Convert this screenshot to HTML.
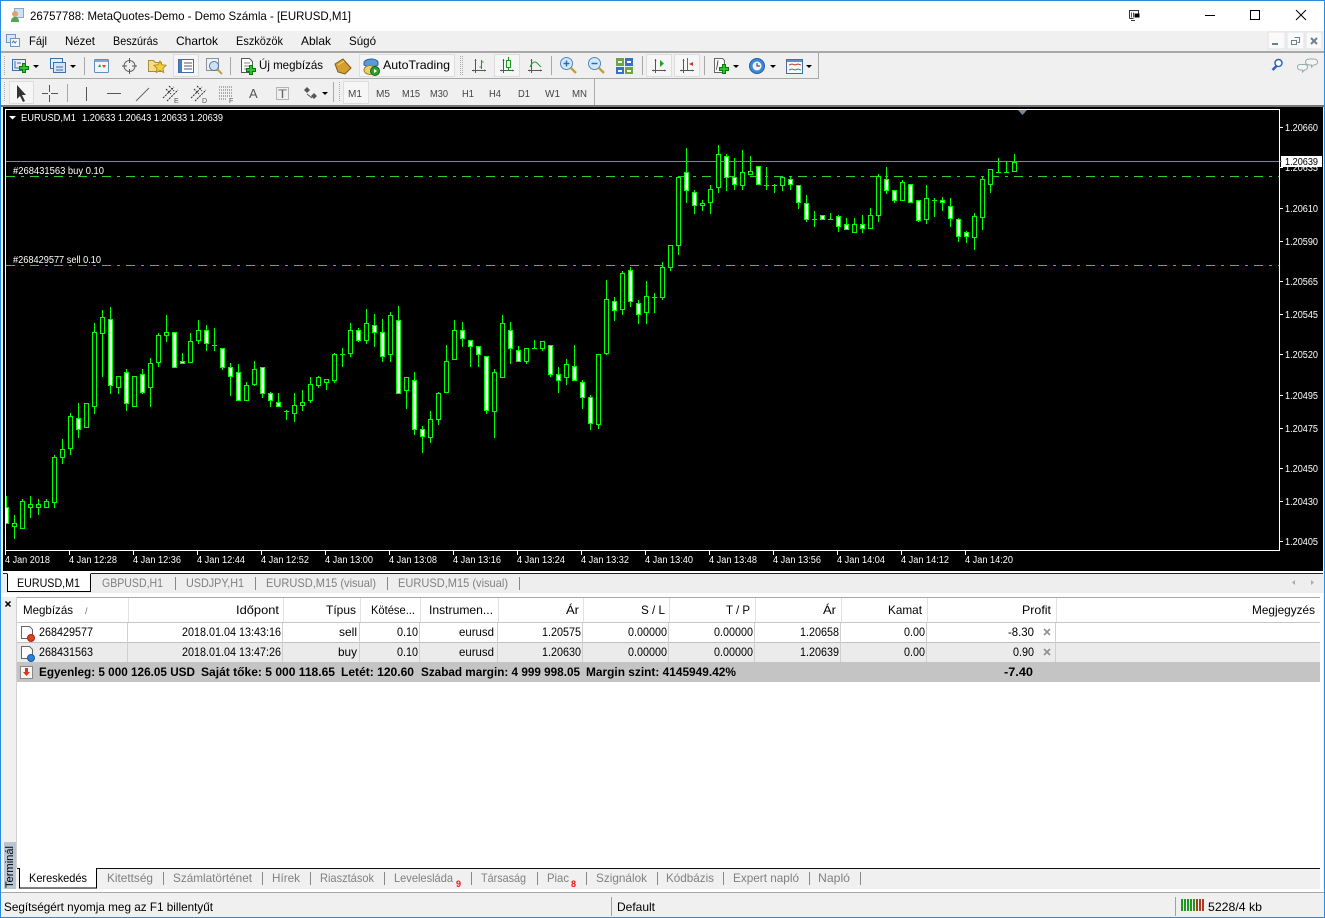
<!DOCTYPE html>
<html><head><meta charset="utf-8"><title>MetaTrader</title>
<style>
html,body{margin:0;padding:0;background:#f0f0f0;overflow:hidden;width:1325px;height:918px}
svg{display:block}
text{font-family:"Liberation Sans",sans-serif;font-size:12px;fill:#000;white-space:pre}
.c text{font-size:10px;fill:#fff}
.g text{fill:#808080}
.k text{fill:#333}
.b text{font-weight:bold}
.tf text{font-size:10px;fill:#444}
.cr{shape-rendering:crispEdges}
</style></head><body>
<svg width="1325" height="918" viewBox="0 0 1325 918" xmlns="http://www.w3.org/2000/svg">
<defs>
<clipPath id="cl"><rect x="6" y="110" width="1273" height="440"/></clipPath>
<g id="plus"><path d="M3.500 .5h3v3h3v3h-3v3h-3v-3h-3v-3h3z" fill="#35c035" stroke="#0b7a0b"/></g>
<g id="arr"><path d="M0 0h6l-3 3z" fill="#000"/></g>
<g id="axes"><path d="M4.500 1v14M1 12.500h14" stroke="#555" fill="none"/><path d="M1 12.500l2-1v2zM15 12.500l-2-1v2zM4.500 1l-1 2h2z" fill="#555"/></g>
</defs>
<rect width="1325" height="918" fill="#f0f0f0"/>
<!-- title bar -->
<rect x="1" y="1" width="1323" height="30" fill="#fff"/>
<g>
<rect x="14.500" y="8.500" width="9" height="9" fill="#cfe0f2" stroke="#8aa8c8"/>
<circle cx="15" cy="14" r="3" fill="#e0a070"/><path d="M11 22c0-4 2-5 4-5s4 1 4 5z" fill="#52a552"/>
</g>
<text x="30" y="20" textLength="321" lengthAdjust="spacingAndGlyphs">26757788: MetaQuotes-Demo - Demo Számla - [EURUSD,M1]</text>
<g fill="none" stroke="#000" class="cr">
<path d="M1129.500 18.500v-8h9v3M1129.500 18.500h4M1131 20.500h4" stroke="#333"/>
<path d="M1131.500 12.500v5M1133.500 12.500v5" stroke="#555"/>
<rect x="1135.500" y="14.500" width="3" height="2" stroke-width="2"/>
<path d="M1205 15.500h10"/>
<rect x="1250.500" y="10.500" width="9" height="9"/>
</g>
<path d="M1296 10l10 10M1306 10l-10 10" stroke="#000" fill="none"/>
<!-- menu bar -->
<rect x="1" y="31" width="1323" height="21" fill="#f0f0f0"/>
<g>
<rect x="6.500" y="34.500" width="9" height="8" fill="#dbe8f6" stroke="#6d95c5"/>
<rect x="10.500" y="38.500" width="9" height="8" fill="#f4f8fc" stroke="#6d95c5"/>
<path d="M12 43l1.500-2 1.500 2 1.500-2" stroke="#4477aa" fill="none"/>
</g>
<text x="29" y="45" textLength="18" lengthAdjust="spacingAndGlyphs">Fájl</text>
<text x="65" y="45" textLength="30" lengthAdjust="spacingAndGlyphs">Nézet</text>
<text x="113" y="45" textLength="45" lengthAdjust="spacingAndGlyphs">Beszúrás</text>
<text x="176" y="45" textLength="42" lengthAdjust="spacingAndGlyphs">Chartok</text>
<text x="236" y="45" textLength="47" lengthAdjust="spacingAndGlyphs">Eszközök</text>
<text x="301" y="45" textLength="30" lengthAdjust="spacingAndGlyphs">Ablak</text>
<text x="349" y="45" textLength="27" lengthAdjust="spacingAndGlyphs">Súgó</text>
<g class="cr">
<rect x="1268" y="32" width="17" height="17" fill="#fafafa" stroke="#e2e2e2"/>
<rect x="1287" y="32" width="17" height="17" fill="#fafafa" stroke="#e2e2e2"/>
<rect x="1306" y="32" width="16" height="17" fill="#fafafa" stroke="#e2e2e2"/>
<path d="M1272 44h6" stroke="#6f7f8d" stroke-width="2"/>
<path d="M1294.500 37.500h5v5h-2M1291.500 40.500h5v4h-5z" stroke="#6f7f8d" fill="none"/>
</g>
<path d="M1311 38l6 6M1317 38l-6 6" stroke="#6f7f8d" stroke-width="2" fill="none"/>
<rect class="cr" x="1" y="51" width="1323" height="2" fill="#a8a8a8"/>
<!-- toolbar lines -->
<g class="cr" fill="#a8a8a8">
<rect x="1" y="78" width="818" height="1"/>
<rect x="818" y="52" width="1" height="27"/>
<rect x="594" y="79" width="1" height="26"/>
<rect x="1" y="105" width="1323" height="2" fill="#777"/>
<rect x="84" y="57" width="1" height="18"/><rect x="230" y="57" width="1" height="18"/>
<rect x="551" y="56" width="1" height="19"/><rect x="642" y="56" width="1" height="19"/><rect x="704" y="56" width="1" height="19"/>
<rect x="67" y="84" width="1" height="18"/><rect x="333" y="82" width="1" height="20"/>
</g>
<g stroke="#aaa" stroke-dasharray="1 1" fill="none" class="cr">
<path d="M4.500 56v19M4.500 82v20M339.500 82v20M460.500 56v19M462.500 56v19" />
</g>
<!-- pressed buttons -->
<g class="cr" fill="#f6f6f6" stroke="#dddddd">
<rect x="173.500" y="54.500" width="25" height="22"/>
<rect x="494.500" y="54.500" width="25" height="22"/>
<rect x="646.500" y="54.500" width="25" height="22"/>
<rect x="674.500" y="54.500" width="25" height="22"/>
<rect x="359.500" y="54.500" width="95" height="22"/>
<rect x="9.500" y="81.500" width="24" height="22"/>
<rect x="343.500" y="81.500" width="25" height="22"/>
</g>
<!-- toolbar 1 icons -->
<g>
<rect x="12.500" y="59.500" width="13" height="11" fill="#e4eefa" stroke="#3f6fa8"/><path d="M15 61v7h8M17 63h4" stroke="#3f6fa8" fill="none"/>
<use href="#plus" x="19" y="63"/><use href="#arr" x="33" y="65"/>
<rect x="50.500" y="58.500" width="12" height="10" fill="#e4eefa" stroke="#3f6fa8"/><rect x="53.500" y="62.500" width="12" height="10" fill="#d5e4f6" stroke="#3f6fa8"/><path d="M56 67h7M56 70h7" stroke="#3f6fa8"/>
<use href="#arr" x="70" y="65"/>
<rect x="94.500" y="59.500" width="14" height="13" rx="1" fill="#f2f6fb" stroke="#5f8fc0"/><path d="M98 67l2-3 1 3z" fill="#2aa32a"/><path d="M102 65l2 3 2-3z" fill="#d84a2a"/><path d="M95 60h13v2h-13z" fill="#7fa9d6"/>
<circle cx="129.500" cy="66" r="5.500" fill="none" stroke="#666"/><path d="M129.500 58v5M129.500 69v5M122 66h5M132 66h5" stroke="#555"/>
<path d="M148.500 60.500h5l2 2h6v9h-13z" fill="#f5dc8a" stroke="#a98a38"/><path d="M160 61l1.800 3.700 4.200.6-3 3 .7 4.200-3.700-2-3.700 2 .7-4.200-3-3 4.200-.6z" fill="#f4cf3d" stroke="#b58d1e"/>
<rect x="178.500" y="59.500" width="15" height="13" fill="#fff" stroke="#3f6fa8"/><rect x="179" y="60" width="3" height="12" fill="#3f7fd0"/><path d="M184 63h8M184 66h8M184 69h8" stroke="#557"/>
<rect x="206.500" y="58.500" width="12" height="12" fill="#eef1f5" stroke="#8a8f98"/><circle cx="214" cy="66" r="4.500" fill="#cfe2f5" stroke="#4a7ab0"/><path d="M217 69l5 5" stroke="#c8a03a" stroke-width="2"/>
<path d="M241.500 58.500h8l3 3v11h-11z" fill="#fff" stroke="#555"/><path d="M244 63h6M244 66h6M244 69h3" stroke="#888"/><use href="#plus" x="246" y="65"/>
<text x="259" y="69" textLength="64" lengthAdjust="spacingAndGlyphs">Új megbízás</text>
<path d="M335 64l8-5 8 9-6 6-7-2z" fill="#d6a030" stroke="#7d5a12"/><path d="M338 65l6-4" stroke="#f2d488"/>
<path d="M364 62c3-4 12-4 14 0v3c-3 2-11 2-14 0z" fill="#5b9bd8" stroke="#2c5f94"/><ellipse cx="370" cy="70" rx="6" ry="4.500" fill="#e9d070" stroke="#9c8228"/><circle cx="375" cy="71" r="4.500" fill="#2ba32b" stroke="#136613"/><path d="M374 69l3 2-3 2z" fill="#fff"/>
<text x="383" y="69" textLength="67" lengthAdjust="spacingAndGlyphs">AutoTrading</text>
</g>
<g>
<use href="#axes" x="471" y="58"/><path d="M481.500 60v9M481.500 62h2M481.500 67h-2" stroke="#1a9a1a" fill="none"/>
<use href="#axes" x="499" y="58"/><rect x="506.500" y="60.500" width="4" height="7" fill="#fff" stroke="#1a9a1a"/><path d="M508.500 57v3M508.500 68v3" stroke="#1a9a1a"/>
<use href="#axes" x="527" y="58"/><path d="M530 67c2-5 5-6 7-4s3 3 4 4" stroke="#2a9a3a" fill="none"/>
<circle cx="566.500" cy="63.500" r="6" fill="#d5e8f8" stroke="#4f86bb"/><path d="M563.500 63.500h6M566.500 60.500v6" stroke="#2d6fae" stroke-width="1.500"/><path d="M571 68l5 5" stroke="#c8a03a" stroke-width="2.500"/>
<circle cx="594.500" cy="63.500" r="6" fill="#d5e8f8" stroke="#4f86bb"/><path d="M591.500 63.500h6" stroke="#2d6fae" stroke-width="1.500"/><path d="M599 68l5 5" stroke="#c8a03a" stroke-width="2.500"/>
<g class="cr"><rect x="616" y="58" width="8" height="8" fill="#6da544"/><rect x="625" y="58" width="8" height="8" fill="#3b6fc0"/><rect x="616" y="67" width="8" height="7" fill="#3b6fc0"/><rect x="625" y="67" width="8" height="7" fill="#6da544"/><rect x="618" y="61" width="4" height="2" fill="#fff"/><rect x="627" y="61" width="4" height="2" fill="#fff"/><rect x="618" y="70" width="4" height="2" fill="#fff"/><rect x="627" y="70" width="4" height="2" fill="#fff"/></g>
<use href="#axes" x="651" y="58"/><path d="M660 60v7l4-3.500z" fill="#1fa51f"/>
<use href="#axes" x="679" y="58"/><path d="M687.500 58v12" stroke="#3f6fa8"/><path d="M693 62v4l-4-2z" fill="#c0392b"/>
<path d="M714.500 58.500h8l2 2v12h-10z" fill="#fafafa" stroke="#666"/><path d="M718 61c0-2-1 9-2 9" stroke="#444" fill="none"/><use href="#plus" x="719" y="64"/><use href="#arr" x="733" y="65"/>
<circle cx="757" cy="66" r="7.500" fill="#3f87d8" stroke="#1e5da6"/><circle cx="757" cy="66" r="4.500" fill="#eef3fa"/><path d="M757 63v3h3" stroke="#333" fill="none"/><use href="#arr" x="770" y="65"/>
<rect x="786.500" y="59.500" width="16" height="14" fill="#f5f8fc" stroke="#3f6fa8"/><rect x="787" y="60" width="15" height="2" fill="#5a92cf"/><path d="M789 65l3-1 3 1 3-1 3 1" stroke="#b5462a" fill="none"/><path d="M789 70l3-1 3 1 3-1 3 1" stroke="#2a9a3a" fill="none"/><use href="#arr" x="806" y="65"/>
<path d="M1272.500 70l5-5" stroke="#2d62c2" stroke-width="2.500"/><circle cx="1278.500" cy="63" r="3.500" fill="#fff" stroke="#2d62c2" stroke-width="1.500"/>
<path d="M1305.500 62c0-1.500 1.500-3 4-3h4c3 0 4 1.500 4 3s-1 3-4 3l-2 2v-2h-2c-2.500 0-4-1.500-4-3z" fill="#f5f5f5" stroke="#9aa"/>
<path d="M1297.500 67c0-1.500 1-2.500 3-2.500h4c2 0 3 1 3 2.500s-1 3-3 3l-2 2v-2h-2c-2 0-3-1.500-3-3z" fill="#f5f5f5" stroke="#9aa"/>
</g>
<!-- toolbar 2 icons -->
<g>
<path d="M17 85l0 14 3-3 3 6 2-1-3-6h4z" fill="#333"/>
<path d="M49.500 85v7M49.500 95v7M42 93.500h6M51 93.500h7" stroke="#555" fill="none" class="cr"/>
<path d="M86.500 87v14M107 93.500h14" stroke="#555" class="cr"/>
<path d="M136 101l13-13" stroke="#666"/>
<path d="M163 98l11-11M167 101l11-11M166 89l5 5M169 86l5 5" stroke="#333" fill="none" stroke-dasharray="2 1"/>
<text x="174" y="103" style="font-size:7px;fill:#555">E</text>
<path d="M191 98l11-11M195 101l11-11M194 89l5 5M197 86l5 5" stroke="#333" fill="none" stroke-dasharray="2 1"/>
<text x="202" y="103" style="font-size:7px;fill:#555">D</text>
<path d="M219 87h14M219 90h14M219 93h14M219 96h14M219 99h8" stroke="#666" stroke-dasharray="1 1" fill="none" class="cr"/>
<text x="229" y="103" style="font-size:7px;fill:#555">F</text>
<text x="249" y="98" style="font-size:13px;fill:#555">A</text>
<rect x="276.500" y="87.500" width="12" height="12" fill="none" stroke="#777" stroke-dasharray="1 1" class="cr"/>
<text x="278" y="98" style="font-size:12px;fill:#666" textLength="9" lengthAdjust="spacingAndGlyphs">T</text>
<path d="M304 90l3-3 3 3-3 3zM311 96l3-3 3 3-3 3z" fill="#555"/><path d="M307 94l5 4" stroke="#555"/>
<use href="#arr" x="322" y="92"/>
</g>
<g class="tf">
<text x="348" y="97" textLength="14" lengthAdjust="spacingAndGlyphs">M1</text>
<text x="376" y="97" textLength="14" lengthAdjust="spacingAndGlyphs">M5</text>
<text x="402" y="97" textLength="18" lengthAdjust="spacingAndGlyphs">M15</text>
<text x="430" y="97" textLength="18" lengthAdjust="spacingAndGlyphs">M30</text>
<text x="462" y="97" textLength="12" lengthAdjust="spacingAndGlyphs">H1</text>
<text x="489" y="97" textLength="12" lengthAdjust="spacingAndGlyphs">H4</text>
<text x="518" y="97" textLength="12" lengthAdjust="spacingAndGlyphs">D1</text>
<text x="545" y="97" textLength="15" lengthAdjust="spacingAndGlyphs">W1</text>
<text x="572" y="97" textLength="15" lengthAdjust="spacingAndGlyphs">MN</text>
</g>
<!-- chart -->
<rect x="3" y="107" width="1320" height="464" fill="#000"/>
<g class="cr" clip-path="url(#cl)">
<path d="M6 161.500H1279" stroke="#778899" fill="none"/>
<path d="M6 176.500H1279M6 265.500H1279" stroke="#32cd32" stroke-dasharray="9 6 3 6" fill="none"/>
<path fill="none" stroke="#0f0" d="M6.500 496V523M14.500 515V539M22.500 499V528M30.500 496V518M38.500 499V515M46.500 499V508M54.500 455V508M62.500 439V464M70.500 413V455M78.500 403V438M94.500 323V414M102.500 310V377M110.500 307V394M118.500 376V394M126.500 369V411M134.500 376V406M142.500 369V394M150.500 358V407M158.500 333V367M166.500 315V342M174.500 332V367M182.500 353V363M190.500 333V362M198.500 320V344M206.500 325V351M214.500 328V351M222.500 348V370M230.500 363V396M238.500 364V401M246.500 382V401M254.500 361V386M262.500 367V398M270.500 392V407M278.500 393V407M286.500 410V420M294.500 393V422M302.500 390V411M310.500 377V403M318.500 376V388M326.500 379V390M334.500 353V383M342.500 348V367M350.500 323V357M358.500 328V342M366.500 309V344M374.500 314V347M382.500 319V362M390.500 312V362M398.500 306V393M406.500 377V409M414.500 372V435M422.500 426V453M430.500 411V443M438.500 392V425M446.500 345V393M454.500 320V360M462.500 322V347M470.500 340V367M478.500 346V367M486.500 356V414M494.500 369V438M502.500 315V377M510.500 322V364M518.500 346V362M526.500 348V364M534.500 340V349M542.500 341V351M550.500 345V377M558.500 367V393M566.500 359V385M574.500 345V380M582.500 380V409M590.500 395V430M598.500 354V429M606.500 280V355M614.500 297V321M622.500 271V315M630.500 267V307M638.500 300V324M646.500 281V324M654.500 293V313M662.500 262V300M670.500 245V271M678.500 176V255M686.500 148V203M694.500 190V214M702.500 200V211M710.500 185V214M718.500 145V193M726.500 154V191M734.500 158V190M742.500 150V190M750.500 156V174M758.500 166V185M766.500 167V190M774.500 184V193M782.500 176V191M790.500 176V190M798.500 185V209M806.500 195V222M814.500 211V227M830.500 213V220M838.500 215V232M846.500 218V230M854.500 218V233M862.500 215V233M870.500 208V229M878.500 174V222M886.500 167V194M894.500 190V203M902.500 180V201M918.500 200V222M926.500 185V224M934.500 198V217M942.500 197V211M950.500 198V227M958.500 218V242M966.500 231V243M974.500 213V250M982.500 177V230M990.500 169V193M998.500 158V172M1006.500 161V172M1014.500 154V172M212 345.500h5M284 411.500h5M340 354.500h5M532 348.500h5M652 297.500h5M764 185.500h5M772 185.500h5M812 219.500h5M828 219.500h5M932 200.500h5M996 172.500h5M1004 172.500h5"/>
<path fill="#000" stroke="#0f0" d="M12.500 523.500h4v3h-4zM20.500 501.500h4v27h-4zM28.500 504.500h4v3h-4zM36.500 504.500h4v3h-4zM44.500 501.500h4v6h-4zM52.500 457.500h4v45h-4zM60.500 449.500h4v8h-4zM68.500 416.500h4v32h-4zM84.500 403.500h4v24h-4zM92.500 332.500h4v74h-4zM100.500 317.500h4v16h-4zM116.500 376.500h4v11h-4zM132.500 376.500h4v30h-4zM148.500 363.500h4v24h-4zM156.500 335.500h4v27h-4zM164.500 332.500h4v3h-4zM188.500 341.500h4v21h-4zM196.500 330.500h4v10h-4zM244.500 385.500h4v15h-4zM252.500 369.500h4v15h-4zM292.500 405.500h4v8h-4zM300.500 402.500h4v3h-4zM308.500 384.500h4v16h-4zM316.500 377.500h4v8h-4zM324.500 379.500h4v3h-4zM332.500 354.500h4v26h-4zM348.500 330.500h4v23h-4zM364.500 323.500h4v17h-4zM388.500 315.500h4v39h-4zM404.500 377.500h4v13h-4zM428.500 419.500h4v18h-4zM436.500 393.500h4v26h-4zM444.500 361.500h4v31h-4zM452.500 330.500h4v29h-4zM492.500 372.500h4v39h-4zM500.500 323.500h4v54h-4zM524.500 348.500h4v13h-4zM540.500 341.500h4v7h-4zM564.500 364.500h4v13h-4zM596.500 354.500h4v70h-4zM604.500 299.500h4v54h-4zM620.500 273.500h4v36h-4zM644.500 296.500h4v16h-4zM660.500 267.500h4v30h-4zM668.500 245.500h4v22h-4zM676.500 177.500h4v68h-4zM700.500 203.500h4v2h-4zM708.500 189.500h4v13h-4zM716.500 154.500h4v33h-4zM740.500 172.500h4v13h-4zM748.500 171.500h4v3h-4zM780.500 177.500h4v8h-4zM852.500 224.500h4v8h-4zM868.500 215.500h4v13h-4zM876.500 176.500h4v39h-4zM900.500 182.500h4v18h-4zM924.500 198.500h4v21h-4zM972.500 216.500h4v21h-4zM980.500 179.500h4v38h-4zM988.500 169.500h4v15h-4zM1012.500 162.500h4v9h-4z"/>
<path fill="#fff" stroke="#0f0" d="M4.500 507.500h4v16h-4zM76.500 418.500h4v11h-4zM108.500 319.500h4v66h-4zM124.500 372.500h4v31h-4zM140.500 374.500h4v18h-4zM172.500 332.500h4v35h-4zM180.500 361.500h4v2h-4zM204.500 330.500h4v13h-4zM220.500 348.500h4v19h-4zM228.500 367.500h4v9h-4zM236.500 372.500h4v28h-4zM260.500 367.500h4v26h-4zM268.500 393.500h4v7h-4zM276.500 402.500h4v4h-4zM356.500 330.500h4v10h-4zM372.500 325.500h4v7h-4zM380.500 332.500h4v24h-4zM396.500 320.500h4v73h-4zM412.500 380.500h4v49h-4zM420.500 429.500h4v7h-4zM460.500 330.500h4v8h-4zM468.500 340.500h4v6h-4zM476.500 346.500h4v8h-4zM484.500 356.500h4v54h-4zM508.500 330.500h4v18h-4zM516.500 350.500h4v11h-4zM548.500 345.500h4v29h-4zM556.500 374.500h4v6h-4zM572.500 366.500h4v14h-4zM580.500 382.500h4v15h-4zM588.500 397.500h4v26h-4zM612.500 301.500h4v9h-4zM628.500 270.500h4v31h-4zM636.500 303.500h4v11h-4zM684.500 172.500h4v18h-4zM692.500 192.500h4v13h-4zM724.500 156.500h4v21h-4zM732.500 177.500h4v7h-4zM756.500 166.500h4v18h-4zM788.500 179.500h4v5h-4zM796.500 185.500h4v17h-4zM804.500 203.500h4v16h-4zM820.500 215.500h4v4h-4zM836.500 216.500h4v10h-4zM844.500 224.500h4v5h-4zM860.500 224.500h4v4h-4zM884.500 179.500h4v11h-4zM892.500 190.500h4v10h-4zM908.500 184.500h4v18h-4zM916.500 200.500h4v20h-4zM940.500 200.500h4v2h-4zM948.500 206.500h4v12h-4zM956.500 219.500h4v17h-4zM964.500 232.500h4v4h-4z"/>
</g>
<rect class="cr" x="5.500" y="109.500" width="1274" height="441" fill="none" stroke="#fff"/>
<path d="M1018 110h9l-4.500 5z" fill="#778899"/>
<g class="c">
<path d="M9 116h7l-3.500 3.500z" fill="#fff"/>
<text x="21" y="121" textLength="55" lengthAdjust="spacingAndGlyphs">EURUSD,M1</text>
<text x="82" y="121" textLength="141" lengthAdjust="spacingAndGlyphs">1.20633 1.20643 1.20633 1.20639</text>
<text x="13" y="174" textLength="91" lengthAdjust="spacingAndGlyphs">#268431563 buy 0.10</text>
<text x="13" y="263" textLength="88" lengthAdjust="spacingAndGlyphs">#268429577 sell 0.10</text>
<g>
<text x="1285" y="131" textLength="33" lengthAdjust="spacingAndGlyphs">1.20660</text>
<text x="1285" y="171" textLength="33" lengthAdjust="spacingAndGlyphs">1.20635</text>
<text x="1285" y="212" textLength="33" lengthAdjust="spacingAndGlyphs">1.20610</text>
<text x="1285" y="245" textLength="33" lengthAdjust="spacingAndGlyphs">1.20590</text>
<text x="1285" y="285" textLength="33" lengthAdjust="spacingAndGlyphs">1.20565</text>
<text x="1285" y="318" textLength="33" lengthAdjust="spacingAndGlyphs">1.20545</text>
<text x="1285" y="358" textLength="33" lengthAdjust="spacingAndGlyphs">1.20520</text>
<text x="1285" y="399" textLength="33" lengthAdjust="spacingAndGlyphs">1.20495</text>
<text x="1285" y="432" textLength="33" lengthAdjust="spacingAndGlyphs">1.20475</text>
<text x="1285" y="472" textLength="33" lengthAdjust="spacingAndGlyphs">1.20450</text>
<text x="1285" y="505" textLength="33" lengthAdjust="spacingAndGlyphs">1.20430</text>
<text x="1285" y="545" textLength="33" lengthAdjust="spacingAndGlyphs">1.20405</text>
</g>
<path class="cr" d="M1280 127.500h3M1280 167.500h3M1280 208.500h3M1280 241.500h3M1280 281.500h3M1280 314.500h3M1280 354.500h3M1280 395.500h3M1280 428.500h3M1280 468.500h3M1280 501.500h3M1280 541.500h3" stroke="#fff"/>
<rect class="cr" x="1281" y="156" width="41" height="11" fill="#fff"/>
<text x="1285" y="165" textLength="33" lengthAdjust="spacingAndGlyphs" style="fill:#000">1.20639</text>
<path class="cr" d="M1280 161.500h2" stroke="#778899"/>
<path class="cr" d="M5.500 551v4M69.500 551v4M133.500 551v4M197.500 551v4M261.500 551v4M325.500 551v4M389.500 551v4M453.500 551v4M517.500 551v4M581.500 551v4M645.500 551v4M709.500 551v4M773.500 551v4M837.500 551v4M901.500 551v4M965.500 551v4" stroke="#fff"/>
<text x="5" y="563" textLength="45" lengthAdjust="spacingAndGlyphs">4 Jan 2018</text>
<text x="69" y="563" textLength="48" lengthAdjust="spacingAndGlyphs">4 Jan 12:28</text>
<text x="133" y="563" textLength="48" lengthAdjust="spacingAndGlyphs">4 Jan 12:36</text>
<text x="197" y="563" textLength="48" lengthAdjust="spacingAndGlyphs">4 Jan 12:44</text>
<text x="261" y="563" textLength="48" lengthAdjust="spacingAndGlyphs">4 Jan 12:52</text>
<text x="325" y="563" textLength="48" lengthAdjust="spacingAndGlyphs">4 Jan 13:00</text>
<text x="389" y="563" textLength="48" lengthAdjust="spacingAndGlyphs">4 Jan 13:08</text>
<text x="453" y="563" textLength="48" lengthAdjust="spacingAndGlyphs">4 Jan 13:16</text>
<text x="517" y="563" textLength="48" lengthAdjust="spacingAndGlyphs">4 Jan 13:24</text>
<text x="581" y="563" textLength="48" lengthAdjust="spacingAndGlyphs">4 Jan 13:32</text>
<text x="645" y="563" textLength="48" lengthAdjust="spacingAndGlyphs">4 Jan 13:40</text>
<text x="709" y="563" textLength="48" lengthAdjust="spacingAndGlyphs">4 Jan 13:48</text>
<text x="773" y="563" textLength="48" lengthAdjust="spacingAndGlyphs">4 Jan 13:56</text>
<text x="837" y="563" textLength="48" lengthAdjust="spacingAndGlyphs">4 Jan 14:04</text>
<text x="901" y="563" textLength="48" lengthAdjust="spacingAndGlyphs">4 Jan 14:12</text>
<text x="965" y="563" textLength="48" lengthAdjust="spacingAndGlyphs">4 Jan 14:20</text>
</g>
<!-- chart tabs -->
<g class="cr">
<rect x="3" y="571" width="1320" height="2" fill="#fff"/>
<rect x="1" y="573" width="1323" height="20" fill="#eeeeee"/>
<rect x="1" y="593" width="1323" height="4" fill="#fcfcfc"/>
<rect x="7" y="573" width="84" height="19" fill="#fff"/>
<path d="M7.500 574v17.500h83.500M90.500 573v19" stroke="#000" fill="none"/>
<path d="M3 573.500h1320" stroke="#222" fill="none"/>
<path d="M7.500 573.500h83" stroke="#fff"/>
<path d="M175.500 577v13M255.500 577v13M387.500 577v13M519.500 577v13" stroke="#888"/>
</g>
<text x="17" y="587" textLength="63" lengthAdjust="spacingAndGlyphs">EURUSD,M1</text>
<g class="g">
<text x="102" y="587" textLength="61" lengthAdjust="spacingAndGlyphs">GBPUSD,H1</text>
<text x="186" y="587" textLength="58" lengthAdjust="spacingAndGlyphs">USDJPY,H1</text>
<text x="266" y="587" textLength="110" lengthAdjust="spacingAndGlyphs">EURUSD,M15 (visual)</text>
<text x="398" y="587" textLength="110" lengthAdjust="spacingAndGlyphs">EURUSD,M15 (visual)</text>
</g>
<path d="M1295 580v5l-3-2.500zM1311 580v5l3-2.500z" fill="#aaa"/>
<!-- terminal -->
<g class="cr">
<rect x="2" y="597" width="1321" height="296" fill="#fff"/>
<rect x="2" y="597" width="15" height="296" fill="#f0f0f0"/>
<rect x="17" y="597" width="1303" height="1" fill="#a8a8a8"/>
<rect x="17" y="598" width="1303" height="24" fill="#fff"/>
<rect x="17" y="622" width="1303" height="1" fill="#c8c8c8"/>
<rect x="17" y="623" width="1303" height="19" fill="#fff"/>
<rect x="17" y="642" width="1303" height="1" fill="#c0c0c0"/>
<rect x="17" y="643" width="1303" height="19" fill="#ebebeb"/>
<rect x="17" y="662" width="1303" height="20" fill="#c4c4c4"/>
<rect x="16" y="597" width="1" height="271" fill="#d0d0d0"/>
<path d="M128.500 598v24M283.500 598v24M360.500 598v24M420.500 598v24M498.500 598v24M583.500 598v24M669.500 598v24M755.500 598v24M841.500 598v24M927.500 598v24M1056.500 598v24" stroke="#e2e2e2"/>
<path d="M127.500 623v39M282.500 623v39M359.500 623v39M419.500 623v39M497.500 623v39M582.500 623v39M668.500 623v39M754.500 623v39M840.500 623v39M926.500 623v39M1055.500 623v39" stroke="#d0d0d0"/>
</g>
<path d="M5.500 601.500l5 5M10.500 601.500l-5 5" stroke="#000" stroke-width="1.500" fill="none"/>
<g>
<text x="23" y="614" textLength="50" lengthAdjust="spacingAndGlyphs">Megbízás</text>
<text x="85" y="614" style="font-size:9px;fill:#666">/</text>
<g text-anchor="end">
<text x="279" y="614" textLength="43" lengthAdjust="spacingAndGlyphs">Időpont</text>
<text x="356" y="614" textLength="30" lengthAdjust="spacingAndGlyphs">Típus</text>
<text x="415" y="614" textLength="44" lengthAdjust="spacingAndGlyphs">Kötése...</text>
<text x="493" y="614" textLength="64" lengthAdjust="spacingAndGlyphs">Instrumen...</text>
<text x="579" y="614" textLength="13" lengthAdjust="spacingAndGlyphs">Ár</text>
<text x="665" y="614" textLength="24" lengthAdjust="spacingAndGlyphs">S / L</text>
<text x="750" y="614" textLength="24" lengthAdjust="spacingAndGlyphs">T / P</text>
<text x="836" y="614" textLength="13" lengthAdjust="spacingAndGlyphs">Ár</text>
<text x="922" y="614" textLength="34" lengthAdjust="spacingAndGlyphs">Kamat</text>
<text x="1051" y="614" textLength="29" lengthAdjust="spacingAndGlyphs">Profit</text>
<text x="1315" y="614" textLength="63" lengthAdjust="spacingAndGlyphs">Megjegyzés</text>
</g>
</g>
<!-- row icons -->
<g>
<path d="M21.500 626.500h8l3 3v9h-11z" fill="#fff" stroke="#666"/><circle cx="31" cy="638" r="3.500" fill="#e2401c" stroke="#a02a10"/>
<path d="M21.500 646.500h8l3 3v9h-11z" fill="#fff" stroke="#666"/><circle cx="31" cy="658" r="3.500" fill="#2a82d8" stroke="#1a5a9c"/>
<rect x="20.500" y="666.500" width="12" height="12" fill="#f5f5f5" stroke="#888"/><path d="M25 668h3v4h2l-3.500 4-3.500-4h2z" fill="#d9361a"/>
</g>
<g>
<text x="39" y="636" textLength="54" lengthAdjust="spacingAndGlyphs">268429577</text>
<text x="39" y="656" textLength="54" lengthAdjust="spacingAndGlyphs">268431563</text>
<g text-anchor="end">
<text x="281" y="636" textLength="99" lengthAdjust="spacingAndGlyphs">2018.01.04 13:43:16</text>
<text x="357" y="636" textLength="18" lengthAdjust="spacingAndGlyphs">sell</text>
<text x="418" y="636" textLength="21" lengthAdjust="spacingAndGlyphs">0.10</text>
<text x="494" y="636" textLength="35" lengthAdjust="spacingAndGlyphs">eurusd</text>
<text x="581" y="636" textLength="39" lengthAdjust="spacingAndGlyphs">1.20575</text>
<text x="667" y="636" textLength="39" lengthAdjust="spacingAndGlyphs">0.00000</text>
<text x="753" y="636" textLength="39" lengthAdjust="spacingAndGlyphs">0.00000</text>
<text x="839" y="636" textLength="39" lengthAdjust="spacingAndGlyphs">1.20658</text>
<text x="925" y="636" textLength="21" lengthAdjust="spacingAndGlyphs">0.00</text>
<text x="1034" y="636" textLength="26" lengthAdjust="spacingAndGlyphs">-8.30</text>
<text x="281" y="656" textLength="99" lengthAdjust="spacingAndGlyphs">2018.01.04 13:47:26</text>
<text x="357" y="656" textLength="19" lengthAdjust="spacingAndGlyphs">buy</text>
<text x="418" y="656" textLength="21" lengthAdjust="spacingAndGlyphs">0.10</text>
<text x="494" y="656" textLength="35" lengthAdjust="spacingAndGlyphs">eurusd</text>
<text x="581" y="656" textLength="39" lengthAdjust="spacingAndGlyphs">1.20630</text>
<text x="667" y="656" textLength="39" lengthAdjust="spacingAndGlyphs">0.00000</text>
<text x="753" y="656" textLength="39" lengthAdjust="spacingAndGlyphs">0.00000</text>
<text x="839" y="656" textLength="39" lengthAdjust="spacingAndGlyphs">1.20639</text>
<text x="925" y="656" textLength="21" lengthAdjust="spacingAndGlyphs">0.00</text>
<text x="1034" y="656" textLength="21" lengthAdjust="spacingAndGlyphs">0.90</text>
</g>
<path d="M1044 629l6 6M1050 629l-6 6M1044 649l6 6M1050 649l-6 6" stroke="#909090" stroke-width="1.600" fill="none"/>
</g>
<g class="b">
<text x="39" y="676" textLength="156" lengthAdjust="spacingAndGlyphs">Egyenleg: 5 000 126.05 USD</text>
<text x="201" y="676" textLength="134" lengthAdjust="spacingAndGlyphs">Saját tőke: 5 000 118.65</text>
<text x="341" y="676" textLength="73" lengthAdjust="spacingAndGlyphs">Letét: 120.60</text>
<text x="421" y="676" textLength="159" lengthAdjust="spacingAndGlyphs">Szabad margin: 4 999 998.05</text>
<text x="586" y="676" textLength="150" lengthAdjust="spacingAndGlyphs">Margin szint: 4145949.42%</text>
<text x="1033" y="676" text-anchor="end" textLength="29" lengthAdjust="spacingAndGlyphs">-7.40</text>
</g>
<!-- terminal side label -->
<rect class="cr" x="4" y="842" width="12" height="48" fill="#b8c5d3"/>
<text transform="translate(13,888) rotate(-90)" textLength="42" lengthAdjust="spacingAndGlyphs" style="font-size:11px">Terminál</text>
<!-- bottom tabs -->
<g class="cr">
<rect x="17" y="868" width="1303" height="1" fill="#111"/>
<rect x="17" y="869" width="1303" height="20" fill="#f0f0f0"/>
<rect x="19" y="868" width="78" height="20" fill="#fff"/>
<path d="M19.500 868v20h77.500M96.500 868v20" stroke="#000" fill="none"/>
<path d="M163.500 872v13M262.500 872v13M310.500 872v13M384.500 872v13M471.500 872v13M537.500 872v13M586.500 872v13M657.500 872v13M723.500 872v13M809.500 872v13M860.500 872v13" stroke="#888"/>
<rect x="1" y="889" width="1323" height="3" fill="#fff"/>
<rect x="1" y="892" width="1323" height="1" fill="#a8a8a8"/>
</g>
<text x="29" y="882" textLength="58" lengthAdjust="spacingAndGlyphs">Kereskedés</text>
<g class="g">
<text x="107" y="882" textLength="46" lengthAdjust="spacingAndGlyphs">Kitettség</text>
<text x="173" y="882" textLength="79" lengthAdjust="spacingAndGlyphs">Számlatörténet</text>
<text x="272" y="882" textLength="28" lengthAdjust="spacingAndGlyphs">Hírek</text>
<text x="320" y="882" textLength="54" lengthAdjust="spacingAndGlyphs">Riasztások</text>
<text x="394" y="882" textLength="59" lengthAdjust="spacingAndGlyphs">Levelesláda</text>
<text x="481" y="882" textLength="45" lengthAdjust="spacingAndGlyphs">Társaság</text>
<text x="547" y="882" textLength="22" lengthAdjust="spacingAndGlyphs">Piac</text>
<text x="596" y="882" textLength="51" lengthAdjust="spacingAndGlyphs">Szignálok</text>
<text x="666" y="882" textLength="48" lengthAdjust="spacingAndGlyphs">Kódbázis</text>
<text x="733" y="882" textLength="66" lengthAdjust="spacingAndGlyphs">Expert napló</text>
<text x="818" y="882" textLength="32" lengthAdjust="spacingAndGlyphs">Napló</text>
</g>
<text x="456" y="887" style="font-size:9px;font-weight:bold;fill:#f01010">9</text>
<text x="571" y="887" style="font-size:9px;font-weight:bold;fill:#f01010">8</text>
<!-- status bar -->
<rect class="cr" x="1" y="893" width="1323" height="24" fill="#f0f0f0"/>
<text x="4" y="911" textLength="209" lengthAdjust="spacingAndGlyphs">Segítségért nyomja meg az F1 billentyűt</text>
<text x="617" y="911" textLength="38" lengthAdjust="spacingAndGlyphs">Default</text>
<text x="1208" y="911" textLength="54" lengthAdjust="spacingAndGlyphs">5228/4 kb</text>
<g class="cr">
<path d="M611.500 897v19M1175.500 897v19" stroke="#a0a0a0"/>
<path d="M1181 899h2v12h-2zM1184 899h2v12h-2zM1187 899h2v12h-2zM1190 899h2v12h-2zM1193 899h2v12h-2z" fill="#1d9a1d"/>
<path d="M1196 899h2v12h-2zM1199 899h2v12h-2zM1202 899h2v12h-2z" fill="#b03a22"/>
</g>
<!-- window border -->
<g class="cr">
<rect x="0" y="0" width="1325" height="1" fill="#2a8ae0"/>
<rect x="0" y="0" width="1" height="918" fill="#2a8ae0"/>
<rect x="1324" y="0" width="1" height="918" fill="#2a8ae0"/>
<rect x="0" y="917" width="1325" height="1" fill="#2a8ae0"/>
</g>
</svg>
</body></html>
